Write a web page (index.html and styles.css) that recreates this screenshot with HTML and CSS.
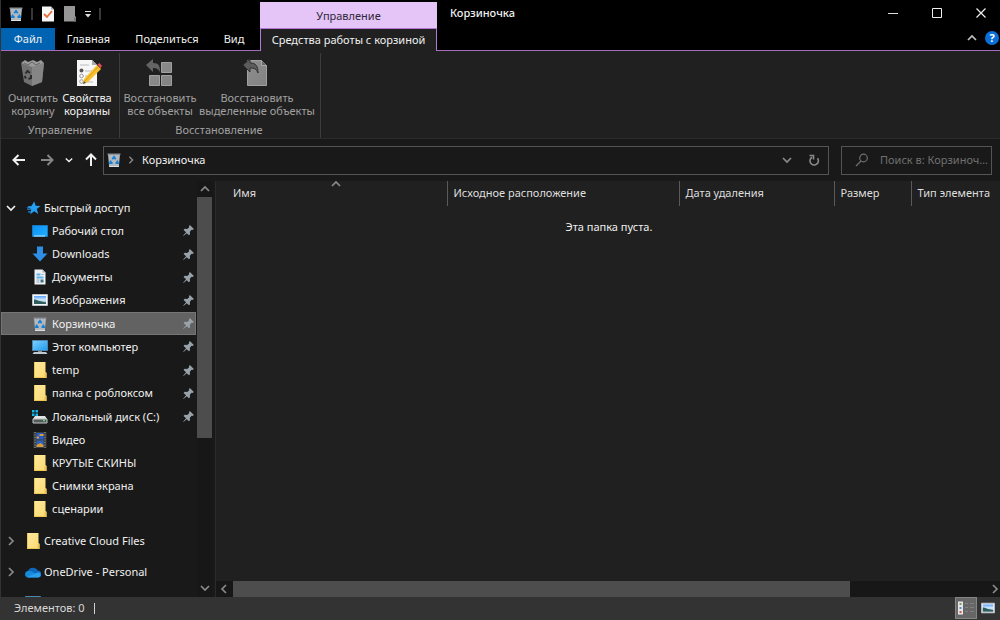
FILE: index.html
```html
<!DOCTYPE html>
<html lang="ru">
<head>
<meta charset="utf-8">
<title>Корзиночка</title>
<link rel="stylesheet" href="styles.css">
</head>
<body>
<svg class="defs" aria-hidden="true">
  <defs>
    <linearGradient id="g-folder" x1="0" y1="0" x2="1" y2="1"><stop offset="0" stop-color="#ffe9a0"/><stop offset="1" stop-color="#fbd96e"/></linearGradient>
    <linearGradient id="g-blue" x1="0" y1="0" x2="1" y2="1"><stop offset="0" stop-color="#0a8ff5"/><stop offset="1" stop-color="#22b0ff"/></linearGradient>
    <linearGradient id="g-screen" x1="0" y1="0" x2="1" y2="1"><stop offset="0" stop-color="#7fd0fb"/><stop offset="1" stop-color="#1e9bf0"/></linearGradient>
    <linearGradient id="g-sky" x1="0" y1="0" x2="0" y2="1"><stop offset="0" stop-color="#5aa2ff"/><stop offset="0.5" stop-color="#d8ecfa"/><stop offset="1" stop-color="#5b86a8"/></linearGradient>
    <linearGradient id="g-grey" x1="0" y1="0" x2="1" y2="1"><stop offset="0" stop-color="#8e8e8e"/><stop offset="1" stop-color="#828282"/></linearGradient>
  </defs>
  <symbol id="bin" viewBox="0 0 16 16">
    <path d="M2 2h12l-1.2 13H3.2z" fill="#b4b9be"/><path d="M1.5 1.5h13v1.4h-13z" fill="#8b8f94"/><path d="M3 14h10v1H3z" fill="#dde0e3"/>
    <path d="M6.300 7.200L8 4.800l1.700 2.400M11 8.600l1 2.400H9.500M6.600 11H4l1-2.400" fill="none" stroke="#1480d8" stroke-width="1.800"/>
  </symbol>
  <symbol id="folder" viewBox="0 0 16 16"><path d="M2 0h11.500v10l1 1v5H2z" fill="url(#g-folder)"/><path d="M2 0h1v16H2zM2 15h12v1H2z" fill="#efc64f"/><path d="M12.500 11.500l2-1V16h-2z" fill="#e9c258"/></symbol>
  <symbol id="star" viewBox="0 0 16 16"><path d="M9.200 1.500l1.500 4.300 4.800.2-3.700 3 1.400 5-4-2.700-4 3 1.100-4.700-2.200-1.900H1l5.600-2z" fill="#26a0f5"/><path d="M3 6.500h3M2 9.200h4M3 11.800h3" stroke="#1f86d0" stroke-width="1.200"/></symbol>
  <symbol id="desktop" viewBox="0 0 16 16"><path d="M.5 2.500h15v11H.5z" fill="url(#g-blue)" stroke="#1b78bd"/><path d="M2 13h11" stroke="#bfe8ff"/></symbol>
  <symbol id="download" viewBox="0 0 16 16"><path d="M5 .5h6v7h4.500L8 15.500.5 7.500H5z" fill="#2f8fe6"/></symbol>
  <symbol id="document" viewBox="0 0 16 16"><path d="M2.500.5h8l3 3v12h-11z" fill="#edf1f4"/><path d="M10.500.5v3h3z" fill="#a5b0ba"/><path d="M4.500 4.500h4v2h-4zM4.500 7.500h7v2h-7z" fill="#58b4ea"/><path d="M9.500 5.500h2M4.500 11h3M4.500 13h3" stroke="#8aa4b8"/><path d="M8.500 10.500h3v3h-3z" fill="#3e7080"/></symbol>
  <symbol id="picture" viewBox="0 0 16 16"><path d="M.5 2.500h15v11H.5z" fill="#f4f6f8" stroke="#b9bec4"/><path d="M2 4h12v8H2z" fill="url(#g-sky)"/><path d="M2 7.500c3 0 5 2 12 3V12H2z" fill="#2e5d5c"/></symbol>
  <symbol id="computer" viewBox="0 0 16 16"><path d="M.5 1.500h15v10H.5z" fill="url(#g-screen)" stroke="#4e87ad"/><path d="M6 12h4v1H6z" fill="#86919a"/><path d="M2 13h12l1.500 2H.5z" fill="#c0c9d0"/></symbol>
  <symbol id="disk" viewBox="0 0 16 16"><path d="M0 1h2.500v2.500H0zM3.500 1H6v2.500H3.500zM0 4.500h2.500V7H0zM3.500 4.500H6V7H3.500z" fill="#16b4e8"/><path d="M3 7h10l2 3H1z" fill="#e2e4e5"/><path d="M1 10h14v4H1z" fill="#55595b" stroke="#c5c8c9"/><path d="M11 11.500h2" stroke="#4fe05a" stroke-width="1.500"/></symbol>
  <symbol id="video" viewBox="0 0 16 16"><path d="M1.500 0h13v16h-13z" fill="#3d4042"/><path d="M4.500 1h7v6.500h-7z" fill="#245bc7"/><path d="M4.500 8.500h7v6.500h-7z" fill="#2f62bb"/><path d="M7.500 2h4v2h-4zM4.500 4.500h2.500v2H4.500zM4.500 13l4-2 3 2v2h-7z" fill="#d79b3f"/><path d="M3 0v16M13 0v16" stroke="#999" stroke-dasharray="1 1.500"/></symbol>
  <symbol id="cloud" viewBox="0 0 16 16"><path d="M3 7A5 4.500 0 0 1 12.500 6.500 3.500 3.500 0 0 1 13 13.500H3.500A3 3 0 0 1 3 7z" fill="#0d68bd"/><path d="M3 7C6 6.500 8 8 10 9.200L4 13.500C-.5 13.500-1 8 3 7z" fill="#168bdc"/><path d="M2.500 13L10 9.500 13.500 8.200C16.500 9 16.500 13.500 13 13.500H3.500z" fill="#2aa0ec"/></symbol>
  <symbol id="pin" viewBox="2 2 12 12.300"><path d="M9.500 2L14 6.500l-1.500 1-1-.3-2 2.300.2 2.800-1.200 1.200-2.400-2.400L2.300 14.300 2 14l3.300-4L2.500 7.500l1.200-1.200 2.800.2 2.300-2-.3-1z" fill="#98a2aa"/></symbol>
  <symbol id="down" viewBox="0 0 10 10"><path d="M1 3l4 4 4-4" fill="none" stroke="currentColor" stroke-width="1.700"/></symbol>
  <symbol id="up" viewBox="0 0 10 10"><path d="M1 7l4-4 4 4" fill="none" stroke="currentColor" stroke-width="1.700"/></symbol>
  <symbol id="left" viewBox="0 0 10 10"><path d="M7 1L3 5l4 4" fill="none" stroke="currentColor" stroke-width="1.700"/></symbol>
  <symbol id="right" viewBox="0 0 10 10"><path d="M3 1l4 4-4 4" fill="none" stroke="currentColor" stroke-width="1.700"/></symbol>
  <symbol id="arrow" viewBox="0 0 14 14"><path d="M13 7H2M6.500 2L1.500 7l5 5" fill="none" stroke="currentColor" stroke-width="2"/></symbol>
</svg>

<div class="window">
  <header class="top">
    <div class="left-top">
      <div class="quick">
        <svg class="i16"><use href="#bin"/></svg>
        <span class="tick"></span>
        <button class="plain" aria-label="Свойства"><svg class="i16" viewBox="0 0 16 16"><path d="M2 .5h9l3 3V15.500H2z" fill="#f7f7f7"/><path d="M11 .5v3h3z" fill="#aaa"/><path d="M4 8l3 3 5-6" fill="none" stroke="#ea6b3c" stroke-width="1.800"/></svg></button>
        <button class="plain" aria-label="Новая папка"><svg class="i16" viewBox="0 0 16 16"><path d="M2 0h11v10l1 1v4.500H2z" fill="#969696"/><path d="M12 11l2 1v3.500h-2z" fill="#777"/></svg></button>
        <button class="plain" aria-label="Настройка панели"><svg class="i8" viewBox="0 0 8 8"><path d="M1 1.500h6" stroke="#ddd"/><path d="M1 4h6L4 7.500z" fill="#ddd"/></svg></button>
        <span class="tick"></span>
      </div>
      <nav class="tabs">
        <button class="tab file">Файл</button><button class="tab home">Главная</button><button class="tab share">Поделиться</button><button class="tab view">Вид</button>
      </nav>
    </div>
    <div class="context">
      <div class="context-head">Управление</div>
      <button class="context-tab">Средства работы с корзиной</button>
    </div>
    <div class="right-top">
      <h1 class="title">Корзиночка</h1>
      <div class="side">
        <div class="winctl">
          <button class="plain" aria-label="Свернуть"><svg class="i12" viewBox="0 0 12 12"><path d="M1 6.500h10" stroke="#ddd"/></svg></button>
          <button class="plain" aria-label="Развернуть"><svg class="i12" viewBox="0 0 12 12"><path d="M1.500 1.500h9v9h-9z" fill="none" stroke="#eee"/></svg></button>
          <button class="plain" aria-label="Закрыть"><svg class="i12" viewBox="0 0 12 12"><path d="M1.500 1.500l9 9M10.500 1.500l-9 9" stroke="#eee" stroke-width="1.200"/></svg></button>
        </div>
        <div class="help">
          <button class="plain" aria-label="Свернуть ленту"><svg class="i10 soft"><use href="#up"/></svg></button>
          <button class="help-btn" aria-label="Справка">?</button>
        </div>
      </div>
    </div>
  </header>

  <section class="ribbon">
    <div class="group manage">
      <div class="tools">
        <button class="tool off"><svg class="i28" viewBox="0 0 28 28"><path d="M2 4l11 3 12-3-2 19-10 4-8-4z" fill="#717171"/><path d="M13 7l12-3-2 19-10 4z" fill="#858585"/><path d="M2 4l4-3 3 2 5-2 4 2 4-2 3 3-12 4z" fill="#9a9a9a"/><path d="M5 4l4 2 4-3 4 3 4-2" stroke="#666" fill="none"/><path d="M6.500 14.500l2-2.500 2.500 2M12 16l0 3-2.500 1M7 19.500l-1.500-2.500" fill="none" stroke="#2c2c2c" stroke-width="2"/></svg><span>Очистить<br>корзину</span></button>
        <button class="tool"><svg class="i28" viewBox="0 0 28 28"><path d="M4 1h15l5 5v21H4z" fill="#f7f7f7"/><path d="M19 1v5h5z" fill="#aaa"/><path d="M7 6h9M12 12h8M12 17h5M12 23h8" stroke="#b8bcc0"/><circle cx="8.500" cy="11.500" r="2" fill="#555"/><circle cx="8.500" cy="17" r="1.800" fill="none" stroke="#999"/><circle cx="8.500" cy="22.500" r="1.800" fill="none" stroke="#999"/><path d="M24 6l4 4-13 13-5 2 1-5z" fill="#f6c12d"/><path d="M25 8L12 22" stroke="#dd9d20"/><path d="M24.500 5.500l2-1.500 2.500 3-1.500 2z" fill="#ea4d56"/><path d="M10 25l1-3 2 2z" fill="#555"/></svg><span>Свойства<br>корзины</span></button>
      </div>
      <div class="caption">Управление</div>
    </div>
    <div class="group restore">
      <div class="tools">
        <button class="tool off"><svg class="i28" viewBox="0 0 28 28"><path d="M15.500 3.500h10v10h-10zM3.500 16.500h10v10h-10zM15.500 16.500h10v10h-10z" fill="url(#g-grey)" stroke="#a0a0a0"/><path d="M0 6l7-6v4c6 0 7 3 7 9-2-3-3-4-7-4v4z" fill="#646464"/></svg><span>Восстановить<br>все объекты</span></button>
        <button class="tool off"><svg class="i28" viewBox="0 0 28 28"><path d="M4.500 1.500h14l5 5v20h-19z" fill="url(#g-grey)" stroke="#a0a0a0"/><path d="M18.500 1.500v5h5" fill="#666" stroke="#aaa"/><path d="M0 6l7-6v4c6 0 8 3 8 10-2-4-3-5-8-5v4z" fill="#5c5c5c" stroke="#303030"/></svg><span>Восстановить<br>выделенные объекты</span></button>
      </div>
      <div class="caption">Восстановление</div>
    </div>
  </section>

  <section class="address-row">
    <div class="nav">
      <button class="plain" aria-label="Назад"><svg class="i14"><use href="#arrow"/></svg></button>
      <button class="plain dim" aria-label="Вперёд"><svg class="i14 flip"><use href="#arrow"/></svg></button>
      <button class="plain" aria-label="Последние расположения"><svg class="i8"><use href="#down"/></svg></button>
      <button class="plain" aria-label="Вверх"><svg class="i14 turn"><use href="#arrow"/></svg></button>
    </div>
    <div class="address">
      <svg class="i16"><use href="#bin"/></svg><svg class="i8 grey"><use href="#right"/></svg>
      <a href="#" class="crumb">Корзиночка</a>
      <button class="plain grey" aria-label="Список"><svg class="i10"><use href="#down"/></svg></button>
      <button class="plain grey refresh" aria-label="Обновить"><svg class="i12" viewBox="0 0 12 12"><path d="M9.500 4.200A4.200 4.200 0 1 1 4 3.200" fill="none" stroke="currentColor" stroke-width="1.600"/><path d="M1.500 1.500h4V5.500" fill="none" stroke="currentColor" stroke-width="1.600"/></svg></button>
    </div>
    <label class="search"><svg class="i14" viewBox="0 0 14 14"><circle cx="8.500" cy="5" r="3.800" fill="none" stroke="#6e6e6e" stroke-width="1.200"/><path d="M6 8l-5 5" stroke="#6e6e6e" stroke-width="1.200"/></svg><input type="text" aria-label="Поиск" placeholder="Поиск в: Корзиночка"></label>
  </section>

  <main class="main">
    <aside class="sidebar">
      <nav class="tree">
        <ul class="quick-list">
          <li><a href="#" class="row root"><svg class="i10 exp"><use href="#down"/></svg><svg class="i16"><use href="#star"/></svg><span>Быстрый доступ</span></a></li>
          <li><a href="#" class="row"><svg class="i16"><use href="#desktop"/></svg><span>Рабочий стол</span><svg class="pin"><use href="#pin"/></svg></a></li>
          <li><a href="#" class="row"><svg class="i16"><use href="#download"/></svg><span>Downloads</span><svg class="pin"><use href="#pin"/></svg></a></li>
          <li><a href="#" class="row"><svg class="i16"><use href="#document"/></svg><span>Документы</span><svg class="pin"><use href="#pin"/></svg></a></li>
          <li><a href="#" class="row"><svg class="i16"><use href="#picture"/></svg><span>Изображения</span><svg class="pin"><use href="#pin"/></svg></a></li>
          <li><a href="#" class="row selected"><svg class="i16"><use href="#bin"/></svg><span>Корзиночка</span><svg class="pin"><use href="#pin"/></svg></a></li>
          <li><a href="#" class="row"><svg class="i16"><use href="#computer"/></svg><span>Этот компьютер</span><svg class="pin"><use href="#pin"/></svg></a></li>
          <li><a href="#" class="row"><svg class="i16"><use href="#folder"/></svg><span>temp</span><svg class="pin"><use href="#pin"/></svg></a></li>
          <li><a href="#" class="row"><svg class="i16"><use href="#folder"/></svg><span>папка с роблоксом</span><svg class="pin"><use href="#pin"/></svg></a></li>
          <li><a href="#" class="row"><svg class="i16"><use href="#disk"/></svg><span>Локальный диск (C:)</span><svg class="pin"><use href="#pin"/></svg></a></li>
          <li><a href="#" class="row"><svg class="i16"><use href="#video"/></svg><span>Видео</span></a></li>
          <li><a href="#" class="row"><svg class="i16"><use href="#folder"/></svg><span>КРУТЫЕ СКИНЫ</span></a></li>
          <li><a href="#" class="row"><svg class="i16"><use href="#folder"/></svg><span>Снимки экрана</span></a></li>
          <li><a href="#" class="row"><svg class="i16"><use href="#folder"/></svg><span>сценарии</span></a></li>
        </ul>
        <ul class="root-list">
          <li><a href="#" class="row root"><svg class="i10 exp grey"><use href="#right"/></svg><svg class="i16"><use href="#folder"/></svg><span>Creative Cloud Files</span></a></li>
          <li><a href="#" class="row root"><svg class="i10 exp grey"><use href="#right"/></svg><svg class="i16"><use href="#cloud"/></svg><span>OneDrive - Personal</span></a></li>
          <li><a href="#" class="row root" aria-label="Компьютер"><svg class="i10 exp grey"><use href="#right"/></svg><svg class="i16"><use href="#computer"/></svg></a></li>
        </ul>
      </nav>
      <div class="vscroll"><svg class="i10"><use href="#up"/></svg><div class="vtrack"><div class="vthumb"></div></div><svg class="i10"><use href="#down"/></svg></div>
    </aside>
    <section class="content">
      <table class="columns">
        <colgroup><col class="c-name"><col class="c-place"><col class="c-date"><col class="c-size"><col></colgroup>
        <thead><tr>
          <th>Имя<svg class="sort i10"><use href="#up"/></svg></th><th>Исходное расположение</th><th>Дата удаления</th><th>Размер</th><th>Тип элемента</th>
        </tr></thead>
      </table>
      <p class="empty">Эта папка пуста.</p>
      <div class="hscroll"><svg class="i10"><use href="#left"/></svg><div class="htrack"><div class="hthumb"></div></div><svg class="i10"><use href="#right"/></svg></div>
    </section>
  </main>

  <footer class="status">
    <span class="count">Элементов: 0</span><span class="bar"></span>
    <button class="mode active" aria-label="Таблица"><svg class="i16" viewBox="0 0 16 16"><path d="M0 1.500h5v13H0z" fill="#e6e6e6"/><path d="M2.500 3v2" stroke="#7b9b6e" stroke-width="2"/><path d="M2.500 7v2" stroke="#5a8ad6" stroke-width="2"/><path d="M2.500 11v2" stroke="#cf5a50" stroke-width="2"/><path d="M7 3.500h3M12 3.500h4M7 7.500h3M12 7.500h4M7 11.500h3M12 11.500h4" stroke="#808080"/></svg></button>
    <button class="mode" aria-label="Крупные значки"><svg class="i14"><use href="#picture"/></svg></button>
  </footer>
</div>
</body>
</html>
```

FILE: styles.css
```css
* { box-sizing: border-box; }
body { margin: 0; background: #191919; color: #f0f0f0; font: 11px/14px "Noto Sans", "Open Sans", sans-serif; }
button, input { font: inherit; color: inherit; background: none; border: 0; padding: 0; }
button { white-space: nowrap; }
a { color: inherit; text-decoration: none; }
ul { list-style: none; margin: 0; padding: 0; }
svg { display: block; flex: none; }
.defs { position: absolute; width: 0; height: 0; }
.i8 { width: 8px; height: 8px; }
.i10 { width: 10px; height: 10px; }
.i12 { width: 12px; height: 12px; }
.i14 { width: 14px; height: 14px; }
.i16 { width: 16px; height: 16px; }
.i28 { width: 28px; height: 28px; overflow: visible; }
.plain { display: flex; align-items: center; justify-content: center; }
.grey { color: #8a8a8a; }
.soft { color: #c0c0c0; }
.dim { color: #858585; }
.flip { transform: scaleX(-1); }
.turn { transform: rotate(90deg); }

.window { min-height: 100vh; display: flex; flex-direction: column; border-left: 1px solid #333; overflow: hidden; }

.top { display: flex; background: #000; }
.left-top { width: 259px; border-bottom: 1px solid #a56cbb; }
.quick { height: 28px; display: flex; align-items: center; gap: 6px; padding-left: 7px; }
.tick { width: 2px; height: 12px; margin: 0 1px; background: #383838; }
.tabs { display: flex; height: 22px; }
.tab { text-align: center; }
.file { width: 54px; background: #0063b1; }
.home { width: 67px; }
.share { width: 90px; }
.view { width: 44px; }
.context { width: 177px; padding-top: 2px; }
.context-head { height: 26px; line-height: 27px; text-align: center; background: #e5c4f7; color: #30283a; }
.context-tab { width: 100%; height: 23px; display: block; background: #202020; border: 1px solid #b577d4; border-bottom: 0; }
.right-top { flex: 1; display: flex; justify-content: space-between; border-bottom: 1px solid #a56cbb; }
.title { margin: 6px 0 0 13px; font-size: 11px; line-height: 14px; font-weight: 500; }
.winctl { display: flex; height: 26px; align-items: center; gap: 32px; padding-right: 13px; }
.help { display: flex; height: 24px; align-items: center; justify-content: flex-end; gap: 8px; padding-right: 1px; }
.help-btn { width: 14px; height: 14px; border-radius: 50%; background: #0a70d8; color: #fff; font-weight: 700; line-height: 14px; }

.ribbon { display: flex; height: 88px; padding-top: 2px; background: #202020; border-bottom: 1px solid #2b2b2b; }
.group { display: flex; flex-direction: column; justify-content: space-between; padding: 6px 4px 1px; border-right: 1px solid #3c3c3c; }
.tools { display: grid; }
.manage .tools { grid-template-columns: 54px 54px; padding-left: 1px; padding-right: 1px; }
.restore { padding-left: 2px; }
.restore .tools { grid-template-columns: 76px 118px; }
.tool { display: flex; flex-direction: column; align-items: center; gap: 4px; line-height: 13px; }
.off, .caption { color: #a0a0a0; }
.caption { text-align: center; }

.address-row { display: flex; align-items: center; gap: 5px; height: 42px; padding: 0 8px 0 11px; }
.nav { display: flex; align-items: center; justify-content: space-between; width: 86px; }
.nav .plain:nth-child(2) { margin-left: 3px; }
.address { flex: 1; display: flex; align-items: center; gap: 8px; height: 29px; padding-left: 2px; border: 1px solid #545454; }
.crumb { flex: 1; }
.refresh { width: 28px; }
.address .i8 { margin: 0 -1px 0 -3px; }
.search { display: flex; align-items: center; gap: 11px; width: 151px; height: 29px; margin-left: 7px; padding-left: 13px; border: 1px solid #545454; }
.search input { width: 100%; min-width: 0; outline: 0; text-overflow: ellipsis; }
.search input::placeholder { color: #707070; opacity: 1; }

.main { flex: 1; display: flex; min-height: 0; }
.sidebar { position: relative; width: 214px; overflow: hidden; flex: none; }
.tree { position: absolute; inset: 15px 19px 0 0; }
.quick-list { display: grid; grid-auto-rows: 1fr; height: 325px; margin-bottom: 4px; }
.row { display: flex; align-items: center; gap: 4px; height: 100%; padding: 0 1px 0 30px; white-space: nowrap; border: 1px solid transparent; }
.root { padding-left: 4px; }
.root .exp { margin-right: 5px; }
.root .i16 + span { margin-left: -1px; }
.root-list .row { height: 31px; }
.row .pin { width: 11px; height: 11px; margin-left: auto; }
.selected { background: #626262; border-color: #757575; }
.vscroll { position: absolute; inset: 0 3px 0 auto; width: 15px; display: flex; flex-direction: column; align-items: center; background: #171717; color: #8a8a8a; padding: 3px 0 4px; }
.vtrack { flex: 1; width: 100%; padding: 3px 0; }
.vthumb { height: 63%; background: #4d4d4d; }

.content { flex: 1; min-width: 0; display: flex; flex-direction: column; background: #202020; border-left: 1px solid #2b2b2b; }
.columns { width: 100%; table-layout: fixed; border-collapse: collapse; }
.c-name { width: 231px; }
.c-place { width: 232px; }
.c-date { width: 155px; }
.c-size { width: 77px; }
.columns th { position: relative; height: 25px; padding: 0 0 2px 6px; text-align: left; font-weight: 400; white-space: nowrap; color: #dedede; border-right: 1px solid #5a5a5a; }
.columns th:first-child { padding-left: 17px; }
.columns th:last-child { border-right: 0; }
.sort { position: absolute; left: 50%; top: -2px; color: #8a8a8a; }
.empty { flex: 1; margin: 0; padding: 14px 0 0 2px; text-align: center; }
.hscroll { display: flex; align-items: center; height: 16px; padding: 0 0 0 3px; background: #171717; color: #8a8a8a; }
.htrack { flex: 1; height: 100%; padding: 0 4px; }
.hthumb { width: 82%; height: 100%; background: #4d4d4d; }

.status { display: flex; align-items: center; height: 23px; padding: 0 1px 1px 13px; background: #333; color: #d8d8d8; }
.bar { width: 1px; height: 11px; margin-left: 9px; margin-right: auto; background: #d0d0d0; }
.mode { display: flex; align-items: center; justify-content: center; width: 22px; height: 22px; }
.active { background: #666; border: 1px solid #858585; }
```
